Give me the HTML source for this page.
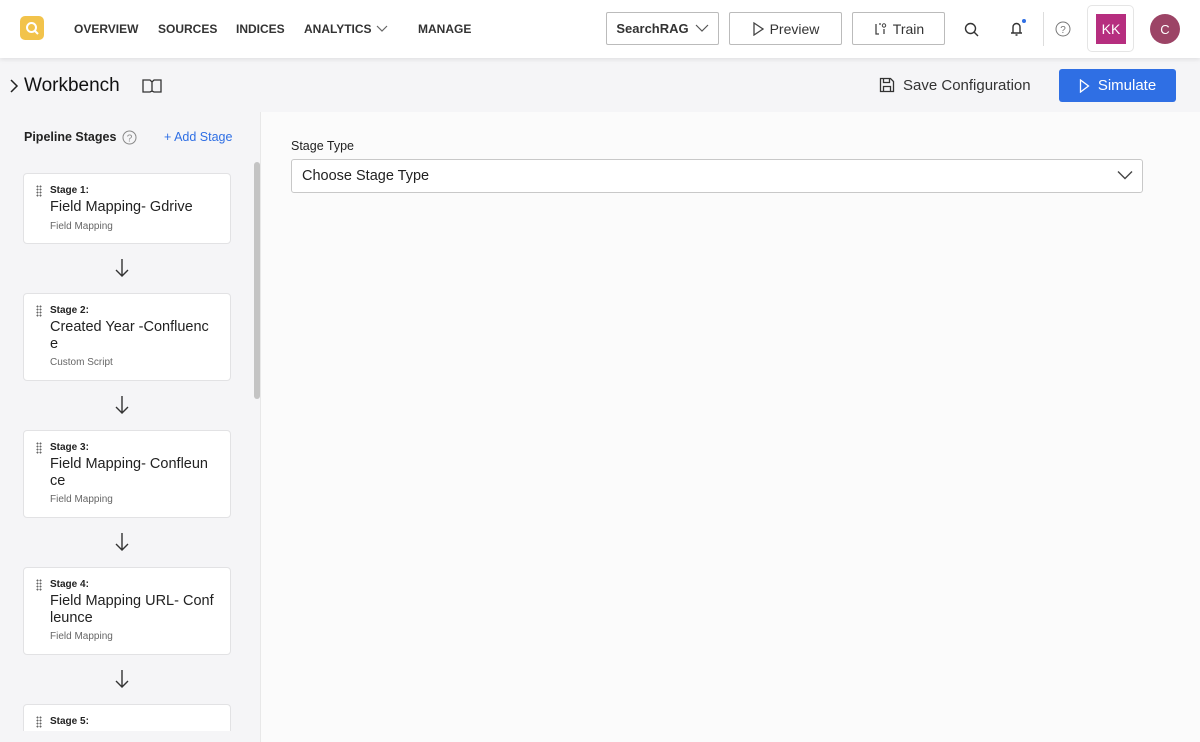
<!DOCTYPE html>
<html style="width:1200px;height:742px;overflow:hidden"><head><meta charset="utf-8"><style>
*{box-sizing:border-box;margin:0;padding:0}
body{width:1200px;height:742px;overflow:hidden;font-family:"Liberation Sans",sans-serif;background:#f5f5f7;position:relative;color:#222}
.hdr{position:absolute;left:0;top:0;width:1200px;height:58px;background:#fff;box-shadow:0 2px 4px rgba(0,0,0,.08);z-index:2}
.abs{position:absolute}
.nav{font-size:12px;font-weight:bold;color:#333;top:22px}
.btn{position:absolute;top:12px;height:33px;border:1px solid #bbb;border-radius:2px;background:#fff;font-size:14px;color:#333;display:flex;align-items:center;justify-content:center;gap:6px}
.card{position:absolute;left:23px;width:208px;background:#fff;border:1px solid #e2e2e4;border-radius:4px}
.card .s{position:absolute;left:26px;top:11px;font-size:10px;font-weight:bold;color:#222}
.card .t{position:absolute;left:26px;top:25px;font-size:14.5px;line-height:17px;width:178px;color:#222}
.card .k{position:absolute;left:26px;font-size:10px;color:#666}
.card .d{position:absolute;left:12px;top:11px;width:6px;height:12px;background-image:radial-gradient(circle,#666 0.9px,transparent 1.1px);background-size:3px 3px}
.arr{position:absolute;left:114px;width:16px;height:20px}
</style></head><body>
<div class="hdr">
 <div class="abs" style="left:20px;top:16px;width:24px;height:24px;background:#f2c34b;border-radius:5px"></div>
 <svg class="abs" style="left:20px;top:16px" width="24" height="24"><circle cx="11.5" cy="11.5" r="4.5" fill="none" stroke="#fff" stroke-width="2"/><path d="M15 15l3 3" stroke="#fff" stroke-width="2"/></svg>
 <div class="abs nav" style="left:74px">OVERVIEW</div>
 <div class="abs nav" style="left:158px">SOURCES</div>
 <div class="abs nav" style="left:236px">INDICES</div>
 <div class="abs nav" style="left:304px">ANALYTICS</div>
 <svg class="abs" style="left:376px;top:25px" width="12" height="8"><path d="M1 1l5 5 5-5" fill="none" stroke="#666" stroke-width="1.2"/></svg>
 <div class="abs nav" style="left:418px">MANAGE</div>
 <div class="btn" style="left:606px;width:113px;font-weight:bold;font-size:13px">SearchRAG <svg width="14" height="9"><path d="M1 1l6 6 6-6" fill="none" stroke="#555" stroke-width="1.2"/></svg></div>
 <div class="btn" style="left:729px;width:113px"><svg width="12" height="14"><path d="M2 1l9 6-9 6z" fill="none" stroke="#444" stroke-width="1.3"/></svg>Preview</div>
 <div class="btn" style="left:852px;width:93px"><svg width="14" height="14"><path d="M3 2v10h3M11 12V7M8 2h-2" fill="none" stroke="#444" stroke-width="1.3"/><circle cx="11" cy="3.5" r="1.7" fill="none" stroke="#444"/></svg>Train</div>
 <svg class="abs" style="left:964px;top:22px" width="15" height="15"><circle cx="6.5" cy="6.5" r="5" fill="none" stroke="#333" stroke-width="1.4"/><path d="M10 10l4 4" stroke="#333" stroke-width="1.4"/></svg>
 <svg class="abs" style="left:1008px;top:18px" width="20" height="20"><path d="M5 15V9a3.5 3.5 0 017 0v6M3 15h11M7.5 17h2" fill="none" stroke="#333" stroke-width="1.4"/><circle cx="16" cy="3" r="2" fill="#2f6fe4"/></svg>
 <div class="abs" style="left:1043px;top:12px;width:1px;height:34px;background:#ddd"></div>
 <svg class="abs" style="left:1055px;top:21px" width="16" height="16"><circle cx="8" cy="8" r="7" fill="none" stroke="#777" stroke-width="1"/><text x="8" y="12" font-size="10" text-anchor="middle" fill="#777" font-family="Liberation Sans">?</text></svg>
 <div class="abs" style="left:1087px;top:5px;width:47px;height:47px;border:1px solid #e5e5e5;border-radius:5px"></div>
 <div class="abs" style="left:1096px;top:14px;width:30px;height:30px;background:#b62e7f;color:#fff;font-size:14px;display:flex;align-items:center;justify-content:center">KK</div>
 <div class="abs" style="left:1150px;top:14px;width:30px;height:30px;border-radius:50%;background:#9c4466;color:#fff;font-size:13px;display:flex;align-items:center;justify-content:center">C</div>
</div>
<svg class="abs" style="left:9px;top:79px" width="10" height="14"><path d="M2 1l6 6-6 6" fill="none" stroke="#222" stroke-width="1.5"/></svg>
<div class="abs" style="left:24px;top:75px;font-size:19px;color:#111">Workbench</div>
<svg class="abs" style="left:142px;top:78px" width="20" height="16"><path d="M1 2h7l2 2 2-2h7v12h-7l-2-1-2 1H1z M10 4v9" fill="none" stroke="#333" stroke-width="1.3"/></svg>
<svg class="abs" style="left:879px;top:77px" width="16" height="16"><path d="M1.5 1.5h10l3 3v10h-13z M4.5 1.5v4h6v-4 M4.5 14.5v-5h7v5" fill="none" stroke="#333" stroke-width="1.3"/></svg>
<div class="abs" style="left:903px;top:77px;font-size:15px;color:#333">Save Configuration</div>
<div class="abs" style="left:1059px;top:69px;width:117px;height:33px;background:#2f6fe4;border-radius:3px;color:#fff;font-size:15px;display:flex;align-items:center;justify-content:center;gap:8px"><svg width="11" height="14"><path d="M1.5 1l8 6-8 6z" fill="none" stroke="#fff" stroke-width="1.3"/></svg>Simulate</div>
<div class="abs" style="left:261px;top:112px;width:939px;height:630px;background:#fbfbfb"></div>
<div class="abs" style="left:260px;top:112px;width:1px;height:630px;background:#e8e8e8"></div>
<div class="abs" style="left:291px;top:139px;font-size:12.5px;color:#222">Stage Type</div>
<div class="abs" style="left:291px;top:159px;width:852px;height:34px;border:1px solid #c8c8c8;border-radius:3px;background:#fff"></div>
<div class="abs" style="left:302px;top:168px;font-size:14.5px;color:#222">Choose Stage Type</div>
<svg class="abs" style="left:1117px;top:170px" width="16" height="10"><path d="M1 1.5l7 7 7-7" fill="none" stroke="#444" stroke-width="1.4"/></svg>
<div class="abs" style="left:24px;top:130px;font-size:12.5px;font-weight:bold;color:#222">Pipeline Stages</div>
<svg class="abs" style="left:122px;top:130px" width="15" height="15"><circle cx="7.5" cy="7.5" r="6.5" fill="none" stroke="#888"/><text x="7.5" y="11.5" font-size="10" text-anchor="middle" fill="#888" font-family="Liberation Sans">?</text></svg>
<div class="abs" style="left:164px;top:130px;font-size:12.5px;color:#2f6fe4">+ Add Stage</div>
<div class="abs" style="left:254px;top:162px;width:6px;height:237px;background:#c4c4c4;border-radius:3px"></div>
<div class="card" style="top:173px;height:71px"><div class="d"></div><div class="s">Stage 1:</div><div class="t">Field Mapping- Gdrive</div><div class="k" style="top:47px">Field Mapping</div></div>
<div class="card" style="top:293px;height:88px"><div class="d"></div><div class="s">Stage 2:</div><div class="t">Created Year -Confluenc<br>e</div><div class="k" style="top:63px">Custom Script</div></div>
<div class="card" style="top:430px;height:88px"><div class="d"></div><div class="s">Stage 3:</div><div class="t">Field Mapping- Confleun<br>ce</div><div class="k" style="top:63px">Field Mapping</div></div>
<div class="card" style="top:567px;height:88px"><div class="d"></div><div class="s">Stage 4:</div><div class="t">Field Mapping URL- Conf<br>leunce</div><div class="k" style="top:63px">Field Mapping</div></div>
<div class="card" style="top:704px;height:27px;border-bottom:none;border-radius:4px 4px 0 0"><div class="d"></div><div class="s">Stage 5:</div></div>
<svg class="arr" style="top:258px" viewBox="0 0 16 20"><path d="M8 1v17M2 12l6 6 6-6" fill="none" stroke="#333" stroke-width="1.4"/></svg>
<svg class="arr" style="top:395px" viewBox="0 0 16 20"><path d="M8 1v17M2 12l6 6 6-6" fill="none" stroke="#333" stroke-width="1.4"/></svg>
<svg class="arr" style="top:532px" viewBox="0 0 16 20"><path d="M8 1v17M2 12l6 6 6-6" fill="none" stroke="#333" stroke-width="1.4"/></svg>
<svg class="arr" style="top:669px" viewBox="0 0 16 20"><path d="M8 1v17M2 12l6 6 6-6" fill="none" stroke="#333" stroke-width="1.4"/></svg>
</body></html>
